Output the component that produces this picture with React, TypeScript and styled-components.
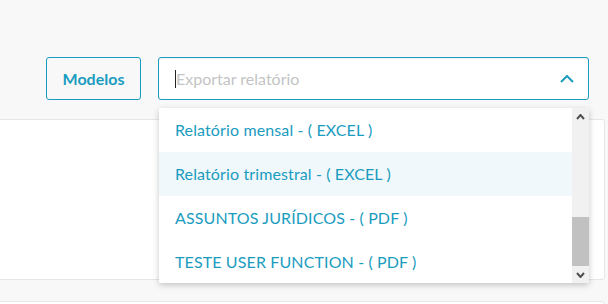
import React from "react";
import styled, { createGlobalStyle } from "styled-components";

const teal = "#1a9cbf";

const GlobalStyle = createGlobalStyle`
  html, body {
    margin: 0;
    padding: 0;
    background: #f8f8f8;
    font-family: Lato, "Open Sans", sans-serif;
    overflow: hidden;
  }
`;

const Page = styled.div`
  width: 608px;
  height: 304px;
  overflow: hidden;
`;

const Toolbar = styled.div`
  display: flex;
  gap: 17px;
  padding: 57px 19px 0 46px;
`;

const OutlineButton = styled.button`
  width: 95px;
  height: 43px;
  border: 1px solid ${teal};
  border-radius: 3px;
  background: transparent;
  color: ${teal};
  font-family: inherit;
  font-weight: 700;
  font-size: 16px;
  padding: 0;
`;

const SelectWrap = styled.div`
  position: relative;
  flex: 1;
`;

const SelectBox = styled.div`
  display: flex;
  align-items: center;
  height: 43px;
  box-sizing: border-box;
  border: 1px solid ${teal};
  border-radius: 3px;
  background: #fff;
  box-shadow: inset 0 1px 2px rgba(0, 0, 0, 0.06);
  padding: 0 14px 0 16px;
`;

const Caret = styled.span`
  width: 1px;
  height: 18px;
  background: #222;
`;

const Placeholder = styled.span`
  flex: 1;
  color: #c4c4c4;
  font-size: 16px;
`;

const Menu = styled.div`
  position: absolute;
  top: 51px;
  left: 1px;
  right: 0;
  height: 175px;
  display: flex;
  background: #fff;
  box-shadow: 0 2px 6px rgba(0, 0, 0, 0.22);
  border-radius: 2px;
  overflow: hidden;
  z-index: 2;
`;

const Options = styled.div`
  flex: 1;
  display: flex;
  flex-direction: column;
`;

const Option = styled.div<{ $active?: boolean }>`
  height: 44px;
  flex-shrink: 0;
  display: flex;
  align-items: center;
  padding: 0 0 1px 16px;
  box-sizing: border-box;
  color: ${teal};
  font-size: 16px;
  letter-spacing: 0.12px;
  background: ${({ $active }) => ($active ? "#f0f8fb" : "#fff")};
`;

const Scrollbar = styled.div`
  width: 17px;
  display: flex;
  flex-direction: column;
  background: #f1f1f1;
`;

const ScrollArrow = styled.div`
  height: 17px;
  display: flex;
  align-items: center;
  justify-content: center;
`;

const Track = styled.div`
  flex: 1;
  display: flex;
  flex-direction: column;
  justify-content: flex-end;
`;

const Thumb = styled.div`
  height: 49px;
  background: #c1c1c1;
`;

const Card = styled.div<{ $h: number }>`
  height: ${({ $h }) => $h}px;
  margin: 0 3px 0 -4px;
  background: #fff;
  border: 1px solid #e6e6e6;
  border-radius: 3px;
`;

const Cards = styled.div`
  display: flex;
  flex-direction: column;
  gap: 21px;
  margin-top: 19px;
`;

const options = [
  "Relatório mensal - ( EXCEL )",
  "Relatório trimestral - ( EXCEL )",
  "ASSUNTOS JURÍDICOS - ( PDF )",
  "TESTE USER FUNCTION - ( PDF )",
];

const Chevron = ({ up, color, w, h, sw }: { up: boolean; color: string; w: number; h: number; sw: number }) => (
  <svg width={w} height={h} viewBox={`0 0 ${w} ${h}`}>
    <polyline
      points={up ? `1,${h - 1} ${w / 2},1 ${w - 1},${h - 1}` : `1,1 ${w / 2},${h - 1} ${w - 1},1`}
      fill="none"
      stroke={color}
      strokeWidth={sw}
    />
  </svg>
);

export default function App() {
  return (
    <Page>
      <GlobalStyle />
      <Toolbar>
        <OutlineButton>Modelos</OutlineButton>
        <SelectWrap>
          <SelectBox>
            <Caret />
            <Placeholder>Exportar relatório</Placeholder>
            <Chevron up color={teal} w={14} h={8} sw={2} />
          </SelectBox>
          <Menu>
            <Options>
              {options.map((o, i) => (
                <Option key={o} $active={i === 1}>
                  {o}
                </Option>
              ))}
            </Options>
            <Scrollbar>
              <ScrollArrow>
                <Chevron up color="#505050" w={9} h={6} sw={2} />
              </ScrollArrow>
              <Track>
                <Thumb />
              </Track>
              <ScrollArrow>
                <Chevron up={false} color="#505050" w={9} h={6} sw={2} />
              </ScrollArrow>
            </Scrollbar>
          </Menu>
        </SelectWrap>
      </Toolbar>
      <Cards>
        <Card $h={159} />
        <Card $h={40} />
      </Cards>
    </Page>
  );
}
